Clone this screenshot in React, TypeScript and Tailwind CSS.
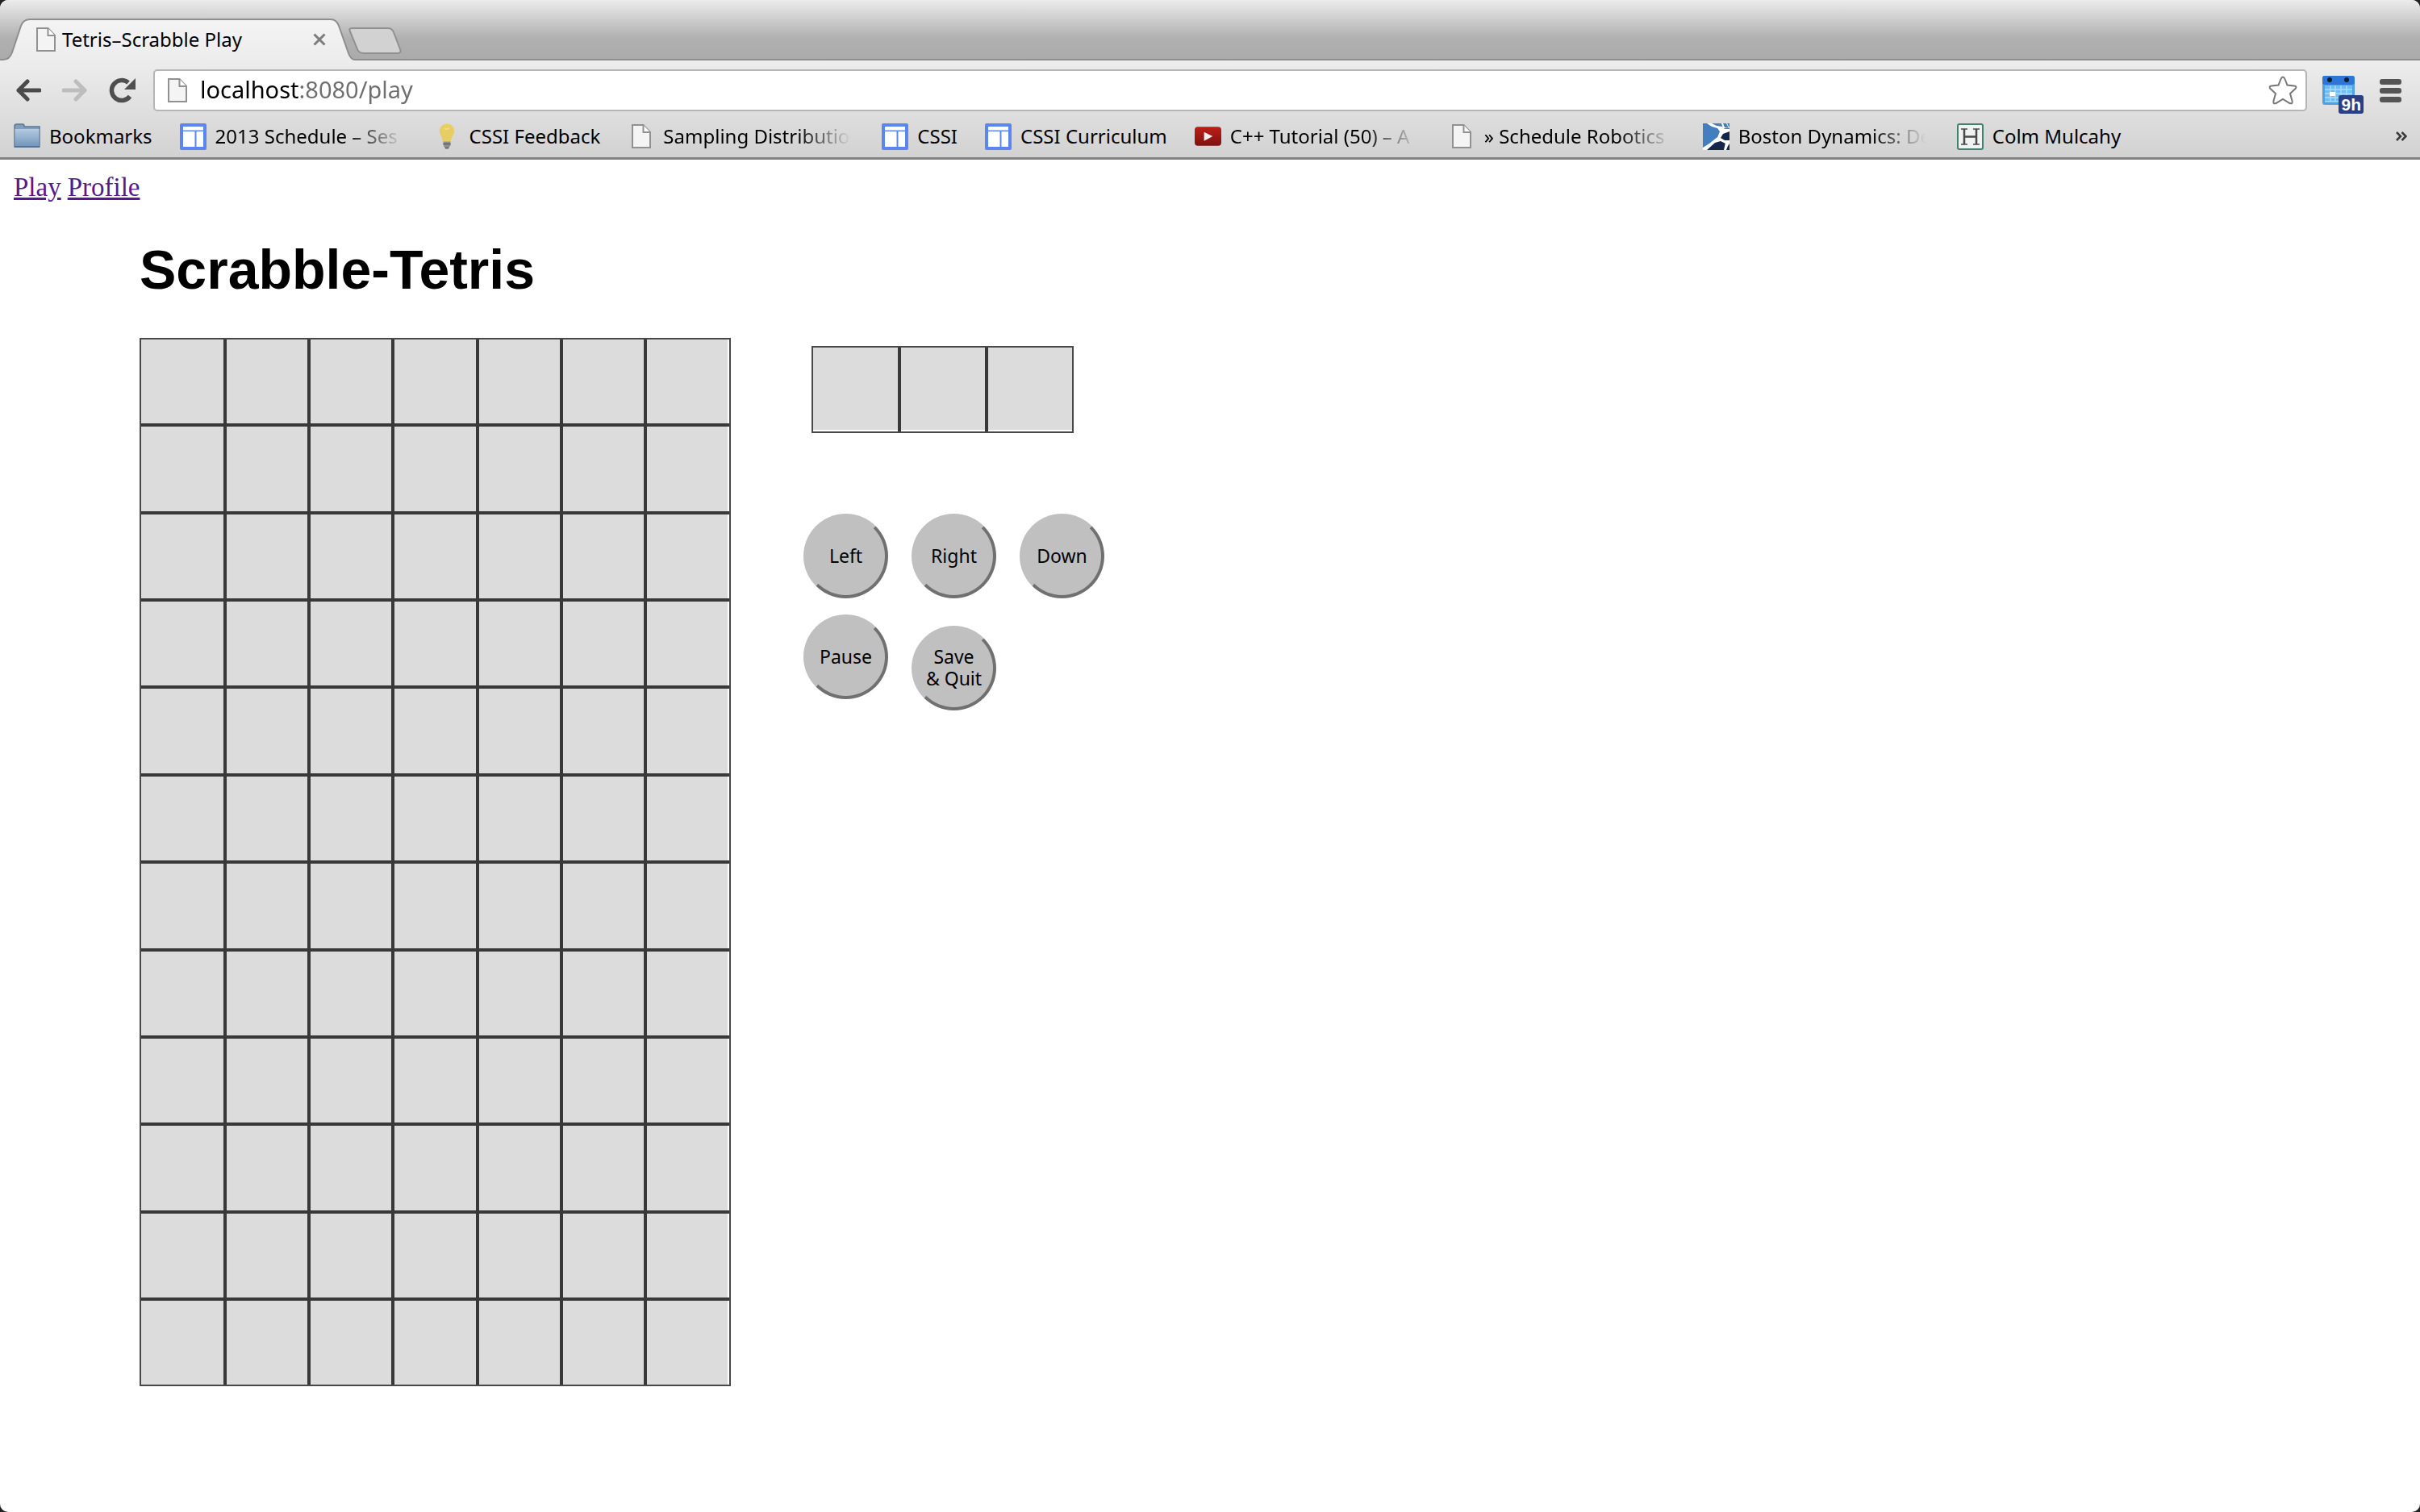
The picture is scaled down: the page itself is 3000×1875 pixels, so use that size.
import type { ReactNode } from "react";

const ROWS = Array.from({ length: 12 }, (_, i) => i);
const COLS = Array.from({ length: 7 }, (_, i) => i);

function PageIcon() {
  return (
    <svg viewBox="0 0 24 30" className="h-[30px] w-6 shrink-0" aria-hidden="true">
      <path d="M1 1H14.5L23 10V29H1Z" fill="#f4f4f4" stroke="#919191" strokeWidth="2" />
      <path d="M14.5 1V10H23" fill="#fff" stroke="#919191" strokeWidth="2" />
    </svg>
  );
}

function FolderIcon() {
  return (
    <svg viewBox="0 0 33 32" className="h-8 w-[33px]" aria-hidden="true">
      <defs>
        <linearGradient id="folder" x1="0" y1="0" x2="0" y2="1">
          <stop offset="0" stopColor="#b4cbe2" />
          <stop offset="1" stopColor="#7296ba" />
        </linearGradient>
      </defs>
      <path d="M1 29V3.5Q1 1 3.500 1H11Q13 1 13 3.500V4H32V29Z" fill="#7f9fbf" stroke="#5d7791" strokeWidth="1.500" />
      <rect x="1.500" y="7" width="30" height="21.500" fill="url(#folder)" />
      <path d="M1 29H32" stroke="#4f6a85" strokeWidth="1.500" />
    </svg>
  );
}

function SitesIcon() {
  return (
    <svg viewBox="0 0 33 33" className="size-[33px]" aria-hidden="true">
      <rect width="33" height="33" rx="2" fill="#5b86f2" />
      <path d="M4 4H29V8.500H4ZM4 10H18.500V29H4ZM20.500 10H29V29H20.500Z" fill="#fff" />
    </svg>
  );
}

function BulbIcon() {
  return (
    <svg viewBox="0 0 20 32" className="h-8 w-5" aria-hidden="true">
      <path d="M10 0.500C4.500 0.500 0.800 4.500 0.800 9.500C0.800 14.500 4.500 16 5 22.500H15C15.500 16 19.200 14.500 19.200 9.500C19.200 4.500 15.500 0.500 10 0.500Z" fill="#e8cd62" />
      <path d="M7 6Q10 8 13 6" fill="none" stroke="#efdb86" strokeWidth="2" />
      <path d="M5.500 22.500H14.500V27L12 31.500H8L5.500 27Z" fill="#8f8f8f" />
      <path d="M5.500 25.500H14.500M8 30.500H12" stroke="#5f6264" strokeWidth="1.500" />
    </svg>
  );
}

function VideoIcon() {
  return (
    <svg viewBox="0 0 34 24" className="h-6 w-[34px]" aria-hidden="true">
      <defs>
        <linearGradient id="video" x1="0" y1="0" x2="0" y2="1">
          <stop offset="0" stopColor="#bd1d18" />
          <stop offset="1" stopColor="#7d1210" />
        </linearGradient>
      </defs>
      <rect width="34" height="24" rx="4" fill="url(#video)" />
      <path d="M12 6.500L23 12L12 18Z" fill="#f4eded" />
    </svg>
  );
}

function RunnerIcon() {
  return (
    <svg viewBox="0 0 33 33" className="size-[33px]" aria-hidden="true">
      <rect width="33" height="33" fill="#437fbf" />
      <path d="M21 11L33 9V33H3L14 23Z" fill="#14264a" />
      <path d="M5 0L11 4L18 6L21 10L18 17L8 25L0 30V33H5L15 24L22 22L28 25L33 25V21L27 21L22 18L25 13L33 10V7L27 7L24 4L17 3L11 0Z" fill="#fff" />
      <path d="M23 0L25 6H33L30 0Z" fill="#fff" />
      <path d="M25 0H29L32 6L27 5Z" fill="#437fbf" />
      <path d="M28 24L33 25L31 28L29 33H26Z" fill="#fff" />
    </svg>
  );
}

function HIcon() {
  return (
    <svg viewBox="0 0 33 33" className="size-[33px]" aria-hidden="true">
      <rect x="1" y="1" width="31" height="31" rx="2" fill="#f1f3f2" stroke="#43806f" strokeWidth="2" />
      <path d="M5 7H13M20 7H28M5 26H13M20 26H28" stroke="#4a4a4a" strokeWidth="1.500" />
      <path d="M9 7V26M24 7V26M9 16.500H24" stroke="#4a4a4a" strokeWidth="2.500" />
    </svg>
  );
}

type Bookmark = { label: string; icon: ReactNode; faded?: boolean };

const BOOKMARKS: Bookmark[] = [
  { label: "Bookmarks", icon: <FolderIcon /> },
  { label: "2013 Schedule – Ses", icon: <SitesIcon />, faded: true },
  { label: "CSSI Feedback", icon: <BulbIcon /> },
  { label: "Sampling Distributio", icon: <PageIcon />, faded: true },
  { label: "CSSI", icon: <SitesIcon /> },
  { label: "CSSI Curriculum", icon: <SitesIcon /> },
  { label: "C++ Tutorial (50) – A", icon: <VideoIcon />, faded: true },
  { label: "» Schedule Robotics", icon: <PageIcon />, faded: true },
  { label: "Boston Dynamics: De", icon: <RunnerIcon />, faded: true },
  { label: "Colm Mulcahy", icon: <HIcon /> },
];

function BookmarkLink({ label, icon, faded }: Bookmark) {
  return (
    <a
      href="#"
      className={
        faded
          ? "flex w-[281px] shrink-0 items-center gap-[11px]"
          : "flex shrink-0 items-center gap-[11px]"
      }
    >
      <span className="flex w-[33px] shrink-0 justify-center">{icon}</span>
      <span
        className={
          faded
            ? "min-w-0 flex-1 whitespace-nowrap [mask-image:linear-gradient(to_right,black_70%,transparent_98%)]"
            : "whitespace-nowrap"
        }
      >
        {label}
      </span>
    </a>
  );
}

function TabStrip() {
  return (
    <div className="relative flex h-[75px] items-start border-b-2 border-[#8e8e8e] bg-linear-to-b from-[#ececec] via-[#b0b0b0] via-65% to-[#ababab]">
      <div className="relative h-[77px] w-[440px] shrink-0">
        <svg viewBox="0 0 440 77" className="absolute inset-0 h-[77px] w-[440px]" aria-hidden="true">
          <defs>
            <linearGradient id="tab" x1="0" y1="0" x2="0" y2="1">
              <stop offset="0" stopColor="#f4f4f4" />
              <stop offset="1" stopColor="#ececec" />
            </linearGradient>
          </defs>
          <path
            d="M0 77V74H4Q12 74 15 65L26 32Q29 24 37 24H410Q417 24 420 32L432 66Q435 74 440 74V77Z"
            fill="url(#tab)"
          />
          <path
            d="M0 74H4Q12 74 15 65L26 32Q29 24 37 24H410Q417 24 420 32L432 66Q435 74 440 74"
            fill="none"
            stroke="#8e8e8e"
            strokeWidth="2"
          />
        </svg>
        <div className="relative flex items-center pt-[33px] pr-[36px] pl-[45px]">
          <PageIcon />
          <span className="ml-2 flex-1 text-[24px] leading-8 whitespace-nowrap">Tetris–Scrabble Play</span>
          <button type="button" aria-label="Close tab">
            <svg viewBox="0 0 16 16" className="size-4">
              <path d="M1.500 1.500L14.500 14.500M14.500 1.500L1.500 14.500" stroke="#7d7d7d" strokeWidth="3" />
            </svg>
          </button>
        </div>
      </div>
      <button type="button" aria-label="New tab" className="-ml-2 pt-[33px]">
        <svg viewBox="0 0 66 34" className="h-[34px] w-[66px]">
          <path
            d="M4 2H49Q54 2 56 7L64 28Q66 33 61 33H19Q13 33 11 28L2 6Q0 2 4 2Z"
            fill="#d2d2d2"
            stroke="#909090"
            strokeWidth="2"
          />
        </svg>
      </button>
    </div>
  );
}

function Toolbar() {
  return (
    <div className="flex items-center pt-[11px] pl-[19px]">
      <button type="button" aria-label="Back">
        <svg viewBox="0 0 32 28" className="h-7 w-8">
          <path d="M15 3L4 14L15 25M4 14H30" fill="none" stroke="#4b4b4b" strokeWidth="5" strokeLinecap="round" strokeLinejoin="round" />
        </svg>
      </button>
      <button type="button" aria-label="Forward" className="ml-[26px]">
        <svg viewBox="0 0 32 28" className="h-7 w-8">
          <path d="M17 3L28 14L17 25M28 14H2" fill="none" stroke="#bdbdbd" strokeWidth="5" strokeLinecap="round" strokeLinejoin="round" />
        </svg>
      </button>
      <button type="button" aria-label="Reload" className="ml-[26px]">
        <svg viewBox="0 0 34 32" className="h-8 w-[34px]">
          <path d="M26 23.500A12.500 12.500 0 1 1 24 6.500" fill="none" stroke="#4f4f4f" strokeWidth="5.500" />
          <path d="M33 1V15H19Z" fill="#4f4f4f" />
        </svg>
      </button>
      <div className="ml-[21px] flex h-[52px] flex-1 items-center rounded-[5px] border-2 border-[#b5b5b5] bg-white pr-[9px] pl-[16px]">
        <PageIcon />
        <input
          type="text"
          aria-label="Address"
          defaultValue="localhost:8080/play"
          className="ml-4 min-w-0 flex-1 bg-linear-to-r from-black from-[124px] to-[#6e6e6e] to-[124px] bg-clip-text pb-[3px] text-[29px] leading-10 text-transparent outline-none"
        />
        <button type="button" aria-label="Bookmark this page">
          <svg viewBox="0 0 38 38" className="size-[38px]">
            <path
              d="M19 2.500Q20.500 2.500 21.500 5L24.500 12.500L33 13.500Q37 14 34.500 17L28 23L30.500 32Q31.500 36.500 27.500 35L19 30L10.500 35Q6.500 36.500 7.500 32L10 23L3.500 17Q1 14 5 13.500L13.500 12.500L16.500 5Q17.500 2.500 19 2.500Z"
              fill="#fff"
              stroke="#777"
              strokeWidth="2"
            />
          </svg>
        </button>
      </div>
      <button type="button" aria-label="Calendar, next event in 9 hours" className="relative ml-[19px] h-[50px] w-[51px]">
        <svg viewBox="0 0 40 36" className="absolute top-[7px] left-0 h-9 w-10">
          <rect width="40" height="36" rx="3" fill="#4f9fe8" />
          <rect y="0" width="40" height="11" rx="3" fill="#2e76d6" />
          <rect x="3" y="12" width="34" height="20" fill="#6dbcf2" />
          <path d="M3 17H37M3 22H37M3 27H37M3 32H37M10 12V32M16 12V32M23 12V32M30 12V32" stroke="#a5dcf9" strokeWidth="1.500" />
          <rect x="9" y="20" width="7" height="5" fill="#fff" />
          <circle cx="9" cy="5" r="3" fill="#0d1c33" />
          <circle cx="30" cy="5" r="3" fill="#0d1c33" />
        </svg>
        <span className="absolute right-0 -bottom-1 rounded-[3px] bg-[#2b3f87] px-[3px] font-['Liberation_Sans',sans-serif] text-[21px] leading-[23px] font-bold text-white">
          9h
        </span>
      </button>
      <button type="button" aria-label="Menu" className="mr-[23px] ml-5 flex w-[27px] flex-col gap-1">
        <span className="h-[7px] rounded-[3px] bg-[#555]" />
        <span className="h-[7px] rounded-[3px] bg-[#555]" />
        <span className="h-[7px] rounded-[3px] bg-[#555]" />
      </button>
    </div>
  );
}

function BookmarksBar() {
  return (
    <nav aria-label="Bookmarks" className="flex h-[57px] items-center gap-[34px] pt-[5px] pr-4 pl-[17px] text-[24px] leading-8">
      {BOOKMARKS.map((b) => (
        <BookmarkLink key={b.label} {...b} />
      ))}
      <button type="button" aria-label="More bookmarks" className="ml-auto">
        <svg viewBox="0 0 14 12" className="h-3 w-3.5">
          <path d="M1 1L6 6L1 11M7.500 1L12.500 6L7.500 11" fill="none" stroke="#3a3a3a" strokeWidth="2.500" />
        </svg>
      </button>
    </nav>
  );
}

function Board() {
  return (
    <table aria-label="Board" className="h-[1300px] w-[733px] table-fixed border-separate border-spacing-0 border-2 border-[#484848] bg-white">
      <tbody>
        {ROWS.map((r) => (
          <tr key={r} className="group last:h-[104px]">
            {COLS.map((c) => (
              <td
                key={c}
                className="border-r-4 border-b-4 border-[#383838] bg-[#dcdcdc] group-last:border-b-0 first:w-[106px] last:w-[102px] last:border-r-0 last:shadow-[inset_-2px_0_white]"
              />
            ))}
          </tr>
        ))}
      </tbody>
    </table>
  );
}

function NextPiece() {
  return (
    <table aria-label="Next piece" className="h-[108px] w-[325px] table-fixed border-separate border-spacing-0 border-2 border-[#484848]">
      <tbody>
        <tr>
          {[0, 1, 2].map((c) => (
            <td key={c} className="border-r-4 border-[#383838] bg-[#dcdcdc] shadow-[inset_0_-2px_white] first:w-[109px] last:w-[104px] last:border-r-0" />
          ))}
        </tr>
      </tbody>
    </table>
  );
}

function RoundButton({ children }: { children: ReactNode }) {
  return (
    <button
      type="button"
      className="size-[105px] rounded-full border-4 border-t-[#c0c0c0] border-r-[#707070] border-b-[#707070] border-l-[#c0c0c0] bg-[#c0c0c0] text-center text-[23px] leading-[27px]"
    >
      {children}
    </button>
  );
}

export default function App() {
  return (
    <div className="min-h-screen bg-[#222]">
      <div className="min-h-screen overflow-hidden rounded-[10px] bg-white font-['Noto_Sans',sans-serif] text-black">
        <header>
          <TabStrip />
          <div className="border-b-[3px] border-[#838383] bg-linear-to-b from-[#ededed] to-[#d2d2d2]">
            <Toolbar />
            <BookmarksBar />
          </div>
        </header>
        <main>
          <nav aria-label="Site" className="flex gap-2 px-[17px] pt-4 font-['Liberation_Serif',serif] text-[33px] leading-9 text-[#551a8b]">
            <a href="#" className="underline">Play</a>
            <a href="#" className="underline">Profile</a>
          </nav>
          <div className="pl-[173px]">
            <h1 className="pt-11 font-['Liberation_Sans',sans-serif] text-[68px] leading-[80px] font-bold">Scrabble-Tetris</h1>
            <div className="mt-[45px] flex items-start">
              <Board />
              <div className="pt-[10px] pl-[90px]">
                <div className="pl-[10px]">
                  <NextPiece />
                </div>
                <div className="mt-[100px] flex items-baseline gap-[29px]">
                  <RoundButton>Left</RoundButton>
                  <RoundButton>Right</RoundButton>
                  <RoundButton>Down</RoundButton>
                </div>
                <div className="mt-5 flex items-baseline gap-[29px]">
                  <RoundButton>Pause</RoundButton>
                  <RoundButton>
                    Save
                    <br />& Quit
                  </RoundButton>
                </div>
              </div>
            </div>
          </div>
        </main>
      </div>
    </div>
  );
}
